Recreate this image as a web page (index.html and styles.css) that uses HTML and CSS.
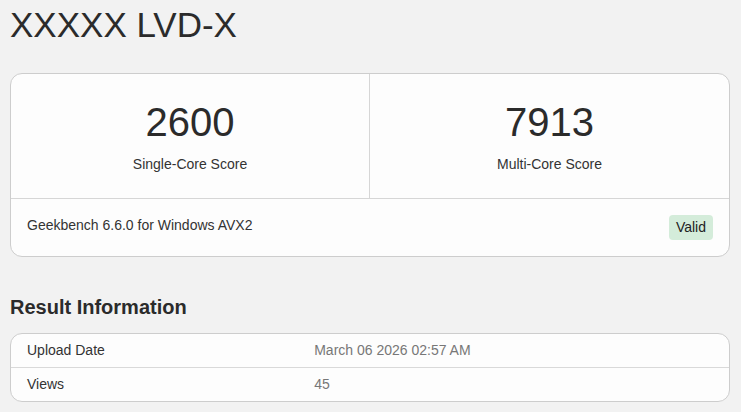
FILE: index.html
```html
<!DOCTYPE html>
<html lang="en">
<head>
  <meta charset="UTF-8">
  <title>XXXXX LVD-X - Geekbench</title>
  <link rel="stylesheet" href="styles.css">
</head>
<body>
  <h1 class="device">XXXXX LVD-X</h1>

  <div class="card">
    <div class="scores">
      <div class="score">
        <div class="score-value">2600</div>
        <div class="score-name">Single-Core Score</div>
      </div>
      <div class="score">
        <div class="score-value">7913</div>
        <div class="score-name">Multi-Core Score</div>
      </div>
    </div>
    <div class="card-footer">
      <span class="version">Geekbench 6.6.0 for Windows AVX2</span>
      <span class="badge">Valid</span>
    </div>
  </div>

  <h2 class="section-title">Result Information</h2>

  <div class="card info">
    <div class="info-row">
      <div class="info-name">Upload Date</div>
      <div class="info-value">March 06 2026 02:57 AM</div>
    </div>
    <div class="info-row">
      <div class="info-name">Views</div>
      <div class="info-value">45</div>
    </div>
  </div>
</body>
</html>
```

FILE: styles.css
```css
* {
  box-sizing: border-box;
}

body {
  margin: 0;
  padding: 0 11px 0 10px;
  font-family: 'Liberation Sans', Arial, sans-serif;
  font-size: 14px;
  color: #333;
  background: #f2f2f2;
}

.device {
  margin: 5px 0 28px;
  font-size: 35px;
  font-weight: normal;
  color: #2b2b2b;
}

.card {
  background: #fdfdfd;
  border: 1px solid #cdcdcd;
  border-radius: 12px;
}

.scores {
  display: grid;
  grid-template-columns: 1fr 1fr;
  border-bottom: 1px solid #d6d6d6;
}

.score {
  text-align: center;
  padding: 26px 0 26px;
}

.score:first-child {
  border-right: 1px solid #d6d6d6;
}

.score-value {
  font-size: 40px;
  color: #2b2b2b;
}

.score-name {
  margin-top: 11px;
}

.card-footer {
  display: flex;
  justify-content: space-between;
  align-items: flex-start;
  padding: 16px 16px 16px;
}

.version {
  padding-top: 2px;
}

.badge {
  background: #d4ecda;
  color: #222;
  border-radius: 4px;
  padding: 4px 7px;
  line-height: 17px;
}

.section-title {
  margin: 39px 0 14px;
  font-size: 20px;
  font-weight: bold;
  color: #2b2b2b;
}

.info-row {
  display: grid;
  grid-template-columns: 40% 60%;
}

.info-row + .info-row {
  border-top: 1px solid #d9d9d9;
}

.info-name,
.info-value {
  padding: 8px 16px;
  line-height: 17px;
}

.info-value {
  color: #777;
}
```
